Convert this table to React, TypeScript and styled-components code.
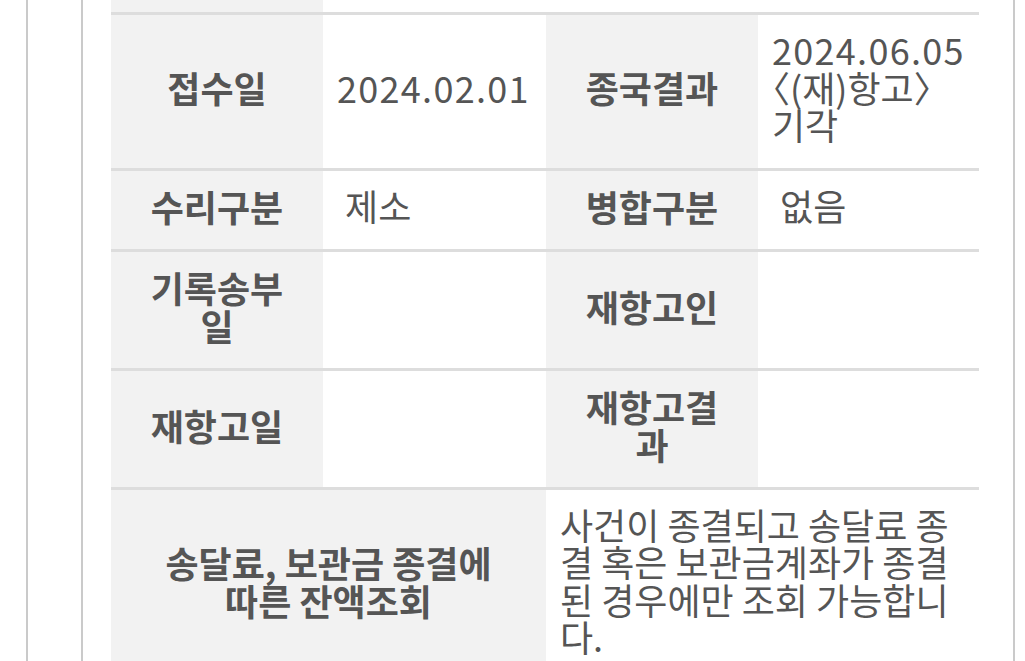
import React from "react";
import styled, { createGlobalStyle } from "styled-components";

const Global = createGlobalStyle`
  html, body { margin: 0; padding: 0; background: #ffffff; }
  body { font-family: "Noto Sans CJK KR", "Noto Sans", sans-serif; overflow: hidden; }
`;

const Page = styled.div`
  padding-left: 26px;
  height: 661px;
  overflow: hidden;
`;

const OuterFrame = styled.div`
  border-left: 2px solid #cacaca;
  padding-left: 53px;
  height: 100%;
`;

const Panel = styled.div`
  width: 868px;
  height: 100%;
  border-left: 2px solid #cacaca;
  border-right: 2px solid #cacaca;
  padding: 0 34px 0 28px;
`;

const Table = styled.div`
  display: flex;
  flex-direction: column;
`;

const Row = styled.div<{ $h?: number }>`
  display: grid;
  grid-template-columns: 212px 223px 212px 221px;
  border-bottom: 3px solid #dddddd;
  ${(p) => (p.$h !== undefined ? `height: ${p.$h}px;` : "")}
`;

const Head = styled.div<{ $span?: number; $px?: number }>`
  grid-column: span ${(p) => p.$span ?? 1};
  background: #f2f2f2;
  display: flex;
  align-items: center;
  justify-content: center;
  text-align: center;
  padding: 16px ${(p) => p.$px ?? 28}px 24px;
  font-size: 36px;
  line-height: 38px;
  font-weight: 700;
  color: #555555;
`;

const Value = styled.div<{ $span?: number }>`
  grid-column: span ${(p) => p.$span ?? 1};
  background: #ffffff;
  display: flex;
  align-items: center;
  padding: 16px 14px 24px 14px;
  font-size: 36px;
  line-height: 37.5px;
  font-weight: 400;
  color: #555555;
`;

const Num = styled.span`
  letter-spacing: 1.3px;
`;

const Bracketed = styled.span`
  white-space: nowrap;
  font-feature-settings: "halt";
`;

const Blank = styled.div<{ $span?: number; $gray?: boolean }>`
  grid-column: span ${(p) => p.$span ?? 1};
  background: ${(p) => (p.$gray ? "#f2f2f2" : "#ffffff")};
`;

export default function App() {
  return (
    <>
      <Global />
      <Page>
        <OuterFrame>
          <Panel>
            <Table>
              <Row $h={12}>
                <Blank $gray />
                <Blank $span={3} />
              </Row>
              <Row>
                <Head>접수일</Head>
                <Value>
                  <Num>2024.02.01</Num>
                </Value>
                <Head>종국결과</Head>
                <Value>
                  <span>
                    <Num>2024.06.05</Num> <Bracketed>〈(재)항고〉</Bracketed> 기각
                  </span>
                </Value>
              </Row>
              <Row>
                <Head>수리구분</Head>
                <Value>&nbsp;제소</Value>
                <Head>병합구분</Head>
                <Value>&nbsp;없음</Value>
              </Row>
              <Row>
                <Head>기록송부일</Head>
                <Value />
                <Head>재항고인</Head>
                <Value />
              </Row>
              <Row>
                <Head>재항고일</Head>
                <Value />
                <Head>재항고결과</Head>
                <Value />
              </Row>
              <Row>
                <Head $span={2} $px={42}>
                  송달료, 보관금 종결에 따른 잔액조회
                </Head>
                <Value $span={2}>
                  사건이 종결되고 송달료 종결 혹은 보관금계좌가 종결된 경우에만 조회 가능합니다.
                </Value>
              </Row>
            </Table>
          </Panel>
        </OuterFrame>
      </Page>
    </>
  );
}
